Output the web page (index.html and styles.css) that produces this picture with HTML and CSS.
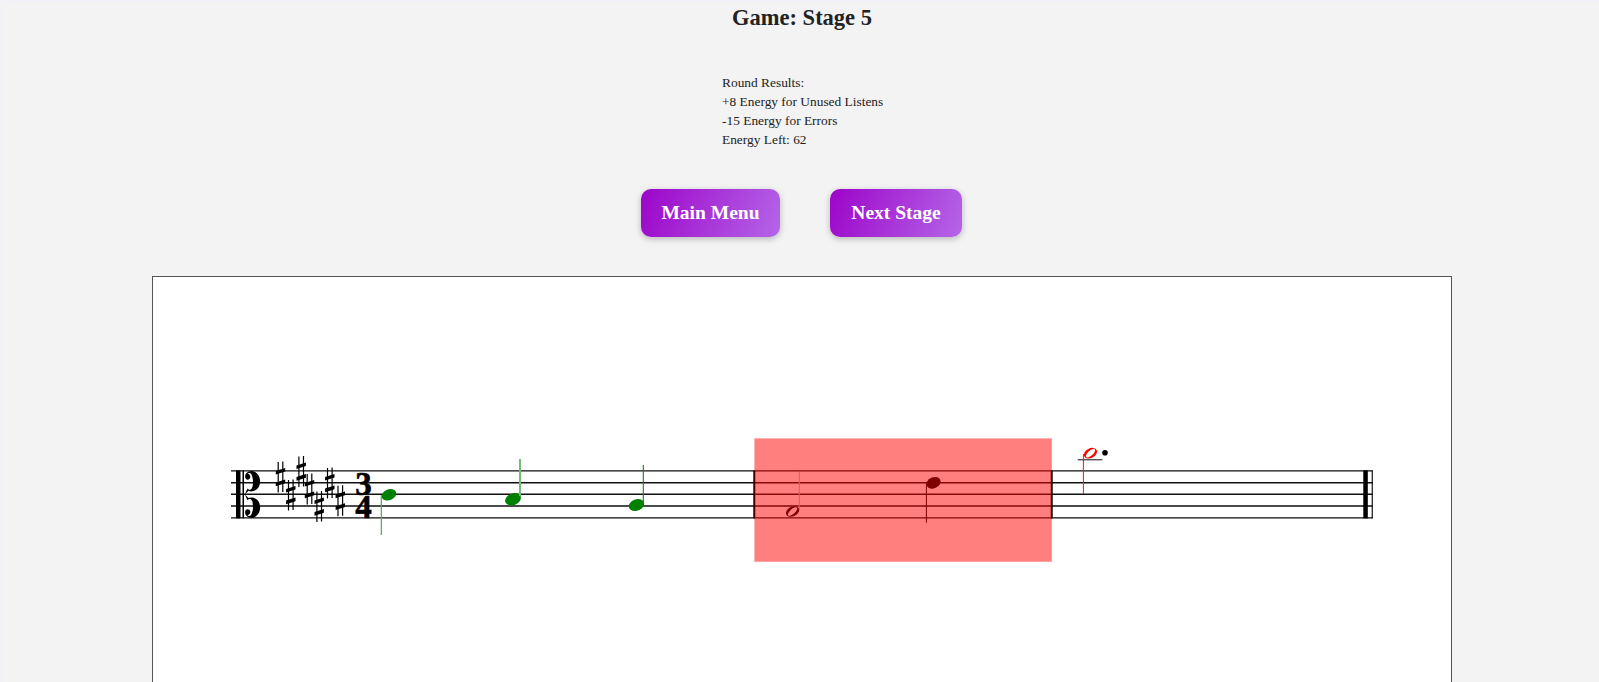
FILE: index.html
```html
<!DOCTYPE html>
<html lang="en">
<head>
<meta charset="utf-8">
<title>Game: Stage 5</title>
<link rel="stylesheet" href="styles.css">
</head>
<body>
<main class="page">
  <h1 class="title">Game: Stage 5</h1>
  <div class="results">
    <div>Round Results:</div>
    <div>+8 Energy for Unused Listens</div>
    <div>-15 Energy for Errors</div>
    <div>Energy Left: 62</div>
  </div>
  <div class="actions">
    <button class="btn btn-menu">Main Menu</button>
    <button class="btn btn-next">Next Stage</button>
  </div>
  <div class="score">
    <svg class="score-svg" viewBox="153 277 1298 420" width="1298" height="420" xmlns="http://www.w3.org/2000/svg">
      <defs>
        <g id="sharp">
          <path d="M-2.300 -15V15.500M2.300 -15.500V15" stroke="#000" stroke-width="1.200" fill="none"/>
          <path d="M-4.700 -4.500L4.700 -7.500V-3.900L-4.700 -0.900ZM-4.700 7.200L4.700 4.200V7.800L-4.700 10.800Z" fill="#000" stroke="none" transform="translate(0 -1.600)"/>
        </g>
        <path id="clef-half" d="M244.800 494.400L247.500 488.500C249 490.500 251 490 252 488C253.500 485 253.500 476 250.500 473.300C249.500 472.500 248 473 247.500 473.800C249.300 474 250.500 475.500 250.300 477.300C250 479.500 247.500 480.300 246 479C244.500 477.500 245 474.500 246.500 473C249 470.300 254 470 257 473.500C261.500 478 261 486 256.500 489.500C253.500 491.800 250.500 491.700 248.500 490.800Z"/>
      </defs>

      <path class="staff" d="M231 470.900H1372.700M231 482.700H1372.700M231 494.300H1372.700M231 506H1372.700M231 517.900H1372.700"/>

      <g class="barlines">
        <rect x="236" y="470.400" width="4.500" height="48"/>
        <rect x="242.500" y="470.400" width="1.500" height="48"/>
        <rect x="753.300" y="470.400" width="2" height="48"/>
        <rect x="1050.700" y="470.400" width="2" height="48"/>
        <rect x="1363.300" y="470.400" width="4.500" height="48"/>
        <rect x="1371.700" y="470.400" width="1.100" height="48"/>
      </g>

      <use href="#clef-half"/>
      <use href="#clef-half" transform="translate(0 988.800) scale(1 -1)"/>

      <use href="#sharp" x="280.500" y="477"/>
      <use href="#sharp" x="290.800" y="495"/>
      <use href="#sharp" x="301.200" y="471.500"/>
      <use href="#sharp" x="309.500" y="489"/>
      <use href="#sharp" x="319.200" y="506.500"/>
      <use href="#sharp" x="329.800" y="483"/>
      <use href="#sharp" x="340.300" y="500.700"/>

      <text class="time" x="363.500" y="494.500">3</text>
      <text class="time" x="363.500" y="518">4</text>

      <g fill="#008000">
        <ellipse cx="389" cy="494.800" rx="7.600" ry="5.400" transform="rotate(-22 389 494.800)"/>
        <ellipse cx="513" cy="499.300" rx="8.200" ry="5.800" transform="rotate(-22 513 499.300)"/>
        <ellipse cx="636.500" cy="505" rx="7.900" ry="5.700" transform="rotate(-22 636.500 505)"/>
      </g>
      <path d="M381.300 495V535" stroke="#4cab4c" stroke-width="1.200"/>
      <path d="M520 459V496" stroke="#74bd74" stroke-width="2"/>
      <path d="M643.300 465V504" stroke="#128512" stroke-width="1.100"/>

      <ellipse cx="792.600" cy="511.500" rx="7" ry="4.800" transform="rotate(-28 792.600 511.500)" fill="#000"/>
      <ellipse cx="792.600" cy="511.500" rx="5.800" ry="2.500" transform="rotate(-42 792.600 511.500)" fill="#fff"/>
      <path d="M799.300 471.700V510" stroke="#b8b8b8" stroke-width="1"/>
      <ellipse cx="933.500" cy="482.800" rx="7.400" ry="5.500" transform="rotate(-24 933.500 482.800)" fill="#000"/>
      <path d="M926.400 483V522.700" stroke="#000" stroke-width="1"/>

      <rect x="754.400" y="438.400" width="297.400" height="123.300" fill="#ff0000" fill-opacity="0.5"/>

      <path d="M1077.700 459.700H1102.300" stroke="#555" stroke-width="1.400"/>
      <ellipse cx="1090.500" cy="453.200" rx="7" ry="4.800" transform="rotate(-28 1090.500 453.200)" fill="#f00"/>
      <ellipse cx="1090.500" cy="453.200" rx="5.800" ry="2.500" transform="rotate(-42 1090.500 453.200)" fill="#fff"/>
      <path d="M1083.400 454V494" stroke="#e61a1a" stroke-width="1"/>
      <circle cx="1105" cy="452.700" r="2.800" fill="#000"/>
    </svg>
  </div>
</main>
</body>
</html>
```

FILE: styles.css
```css
html, body {
  margin: 0;
  padding: 0;
  height: 100%;
  overflow: hidden;
}

body {
  background: #f3f3f3;
  border-top: 2px solid #f2f1f8;
  border-left: 2px solid #f2f1f8;
  box-sizing: border-box;
  color: #222;
  font-family: "Liberation Serif", "Times New Roman", serif;
}

.page {
  display: flex;
  flex-direction: column;
  align-items: center;
  padding-left: 3px;
}

.title {
  margin: 2px 0 0 0;
  font-size: 22.500px;
  line-height: 28px;
  font-weight: 700;
}

.results {
  align-self: flex-start;
  margin: 41px 0 0 717px;
  font-size: 13.400px;
  line-height: 19px;
}

.actions {
  display: flex;
  gap: 50px;
  margin: 39.500px 0 0 -1px;
}

.btn {
  height: 48px;
  padding: 0;
  border: none;
  border-radius: 10px;
  background: linear-gradient(110deg, #9c05c9, #b565e8);
  box-shadow: 0 2px 6px rgba(0, 0, 0, 0.25);
  color: #fff;
  font-family: inherit;
  font-size: 19.500px;
  font-weight: 700;
}

.btn-menu { width: 139px; }
.btn-next { width: 132px; }

.score {
  margin-top: 39px;
  width: 1300px;
  flex: none;
  box-sizing: border-box;
  background: #fff;
  border: 1px solid #555;
  border-bottom: none;
}

.score-svg {
  display: block;
}

.staff {
  fill: none;
  stroke: #111;
  stroke-width: 1.400;
}

.time {
  font-family: "Liberation Serif", serif;
  font-weight: 700;
  font-size: 33px;
  text-anchor: middle;
  fill: #000;
  stroke: #000;
  stroke-width: 0.600;
}
```
